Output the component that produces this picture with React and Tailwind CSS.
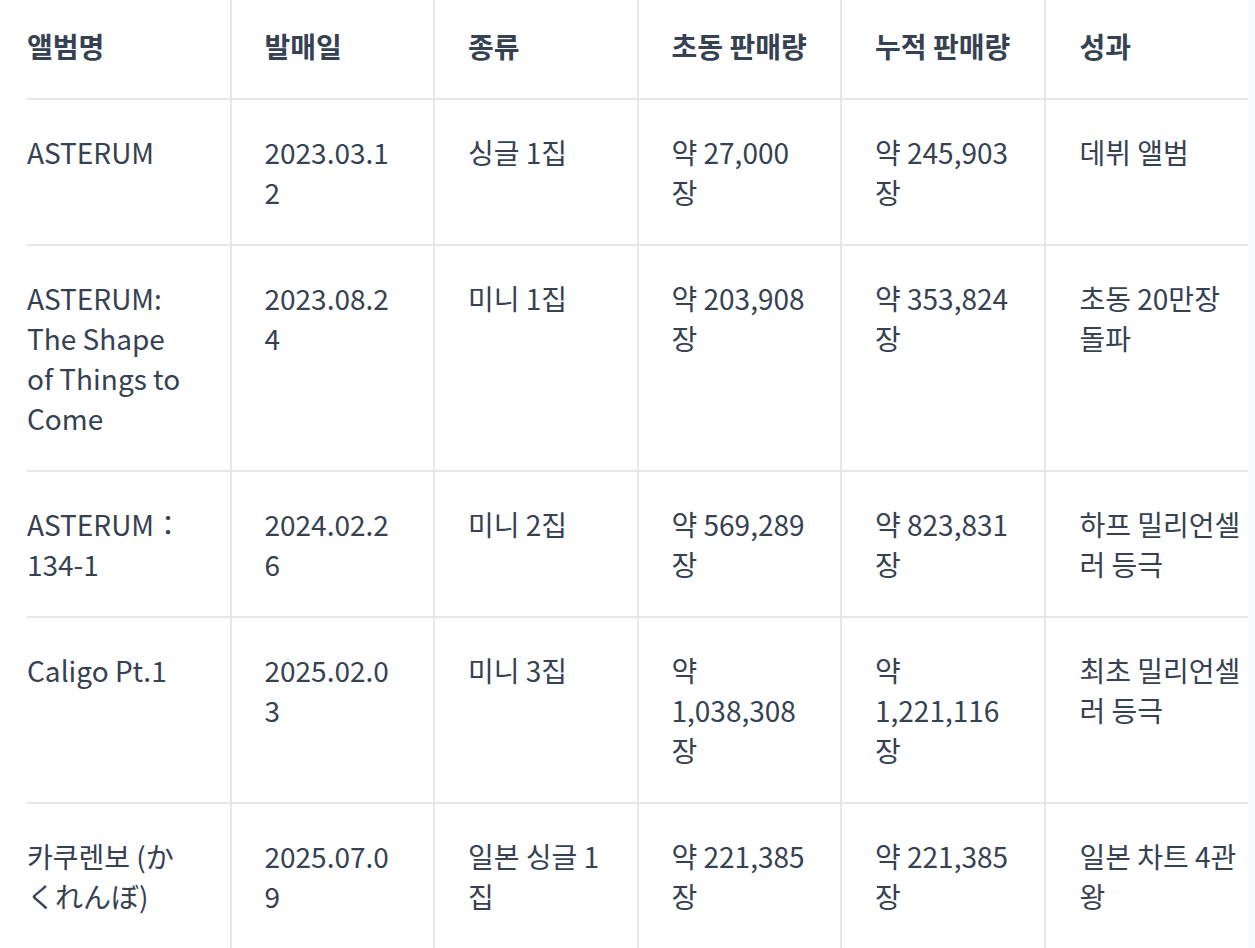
import React from 'react';

const headers = ['앨범명', '발매일', '종류', '초동 판매량', '누적 판매량', '성과'];

const rows = [
    ['ASTERUM', '2023.03.12', '싱글 1집', '약 27,000 장', '약 245,903 장', '데뷔 앨범'],
    ['ASTERUM: The Shape of Things to Come', '2023.08.24', '미니 1집', '약 203,908 장', '약 353,824 장', '초동 20만장 돌파'],
    ['ASTERUM：134-1', '2024.02.26', '미니 2집', '약 569,289 장', '약 823,831 장', '하프 밀리언셀러 등극'],
    ['Caligo Pt.1', '2025.02.03', '미니 3집', '약 1,038,308 장', '약 1,221,116 장', '최초 밀리언셀러 등극'],
    ['카쿠렌보 (かくれんぼ)', '2025.07.09', '일본 싱글 1집', '약 221,385 장', '약 221,385 장', '일본 차트 4관왕'],
];

// first cell has no left pad, last cell no right pad (prose-style table)
const cellPad = (i) => {
    if (i === 0) return 'pl-0 pr-[40px]';
    if (i === headers.length - 1) return 'pl-[34px] pr-0 border-l-2 border-[#e5e7eb]';
    return 'pl-[33px] pr-[35px] border-l-2 border-[#e5e7eb]';
};

const App = () => {
    return (
        <div
            className="flex min-h-screen bg-white text-[#364152] overflow-hidden"
            style={{ fontFamily: '"Noto Sans CJK KR", "Noto Sans", sans-serif' }}
        >
            <div className="w-[1249px] shrink-0 pl-[27px]">
                <table className="table-fixed w-[1221px] border-collapse text-[28px] leading-[40px]">
                    <thead>
                        <tr className="border-b-2 border-[#e5e7eb]">
                            {headers.map((h, i) => (
                                <th
                                    key={h}
                                    className={`text-left align-top font-bold pt-[26px] pb-[32px] whitespace-nowrap ${cellPad(i)}`}
                                >
                                    {h}
                                </th>
                            ))}
                        </tr>
                    </thead>
                    <tbody>
                        {rows.map((row, r) => (
                            <tr key={r} className="border-b-2 border-[#e5e7eb]">
                                {row.map((cell, i) => (
                                    <td
                                        key={i}
                                        className={`text-left align-top font-normal py-[32px] break-words ${cellPad(i)}`}
                                    >
                                        {cell}
                                    </td>
                                ))}
                            </tr>
                        ))}
                    </tbody>
                </table>
            </div>
            <div className="flex-1 bg-[#f8f9fa]" />
        </div>
    );
};

export default App;
